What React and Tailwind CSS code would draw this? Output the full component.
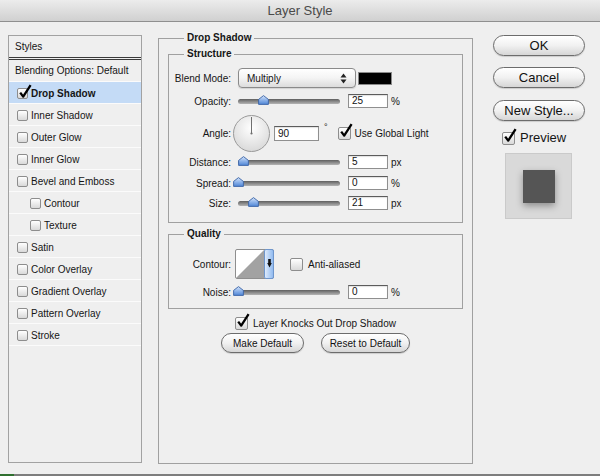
import React from 'react';

const styles = [
  { name: 'Drop Shadow', checked: true, active: true },
  { name: 'Inner Shadow' },
  { name: 'Outer Glow' },
  { name: 'Inner Glow' },
  { name: 'Bevel and Emboss' },
  { name: 'Contour', sub: true },
  { name: 'Texture', sub: true },
  { name: 'Satin' },
  { name: 'Color Overlay' },
  { name: 'Gradient Overlay' },
  { name: 'Pattern Overlay' },
  { name: 'Stroke' },
];

const CheckBox = ({ checked = false, large = false }) => (
  <span
    className={`relative shrink-0 rounded-[2px] border border-[#8d8d8d] bg-linear-to-b from-white to-[#d9d9d9] ${
      large ? 'w-[13px] h-[13px]' : 'w-[11px] h-[11px]'
    }`}
  >
    {checked && (
      <svg
        width="14"
        height="15"
        viewBox="0 0 14 15"
        className="absolute left-[0px] top-[-5px]"
      >
        <path d="M2.2 8.6 L5.2 12.6 L12.6 1.2" fill="none" stroke="#000" strokeWidth="2.3" strokeLinejoin="round" />
      </svg>
    )}
  </span>
);

const Slider = ({ pos, id }) => (
  <div className="relative shrink-0 w-[102px] h-[5px] rounded-full bg-linear-to-b from-[#5f5f5f] via-[#8a8a8a] to-[#b4b4b4]">
    <svg width="11" height="10" viewBox="0 0 11 10" className="absolute top-[-4px]" style={{ left: pos }}>
      <defs>
        <linearGradient id={id} x1="0" y1="0" x2="0" y2="1">
          <stop offset="0" stopColor="#d6e5fa" />
          <stop offset="0.5" stopColor="#8fb4ea" />
          <stop offset="1" stopColor="#4f86d6" />
        </linearGradient>
      </defs>
      <path d="M5.5 0.6 L10.4 4.4 V9.4 H0.6 V4.4 Z" fill={`url(#${id})`} stroke="#3a63a6" strokeWidth="0.9" />
    </svg>
  </div>
);

const Field = ({ value, wide = false }) => (
  <div
    className={`shrink-0 bg-white border border-[#8f8f8f] border-t-[#5c5c5c] pl-[3px] text-[10px] text-[#111] shadow-[inset_0_1px_1px_rgba(0,0,0,0.12)] ${
      wide ? 'w-[45px] h-[15px] leading-[13px]' : 'w-[40px] h-[14px] leading-[12px]'
    }`}
  >
    {value}
  </div>
);

const Row = ({ label, className = '', children }) => (
  <div className={`flex items-center ${className}`}>
    <span className="w-[62px] shrink-0 text-right">{label}</span>
    {children}
  </div>
);

const SliderRow = ({ label, pos, value, unit, id, className }) => (
  <Row label={label} className={`h-[14px] ${className}`}>
    <div className="ml-[7px]">
      <Slider pos={pos} id={id} />
    </div>
    <div className="ml-[8px]">
      <Field value={value} />
    </div>
    <span className="ml-[3px]">{unit}</span>
  </Row>
);

const AquaButton = ({ children, className = '' }) => (
  <button
    className={`flex items-center justify-center rounded-full border border-[#6c6c6c] bg-linear-to-b from-white via-[#f1f1f1] to-[#d6d6d6] shadow-[0_1px_1px_rgba(0,0,0,0.15)] text-[#111] ${className}`}
  >
    {children}
  </button>
);

export default function App() {
  return (
    <div className="w-[600px] h-[476px] flex flex-col bg-[#efefef] font-['Liberation_Sans',Arial,sans-serif] text-[#151515] overflow-hidden">
      {/* Title bar */}
      <div className="h-[22px] shrink-0 flex items-center justify-center border-b border-[#8f8f8f] bg-linear-to-b from-[#ececec] to-[#d0d0d0] text-[13px] text-[#4a4a4a]">
        Layer Style
      </div>

      <div className="flex-1 flex items-start">
        {/* Styles list */}
        <div className="ml-[8px] mt-[13px] w-[134px] h-[428px] shrink-0 border border-[#a2a2a2] text-[10px]">
          <div className="h-[24px] flex items-center pl-[6px] pb-[1px] border-b-[3px] border-double border-[#3a3a3a]">
            Styles
          </div>
          <div className="h-[22px] flex items-center pl-[6px] border-b border-[#fbfbfb]">
            Blending Options: Default
          </div>
          {styles.map((s) => (
            <div
              key={s.name}
              className={`h-[22px] flex items-center gap-[3px] pt-[2px] border-b border-[#fbfbfb] ${
                s.sub ? 'pl-[21px]' : 'pl-[8px]'
              } ${s.active ? 'bg-[#c4dbf6] font-bold' : ''}`}
            >
              <CheckBox checked={s.checked} />
              <span>{s.name}</span>
            </div>
          ))}
        </div>

        {/* Drop Shadow settings */}
        <fieldset className="ml-[16px] mt-[10px] w-[315px] h-[432px] shrink-0 border border-[#a0a0a0] px-[9px] text-[10px]">
          <legend className="ml-[16px] px-[3px] font-bold leading-[12px]">Drop Shadow</legend>

          <fieldset className="mt-[4px] border border-[#a0a0a0] pb-[12px]">
            <legend className="ml-[15px] px-[3px] font-bold leading-[12px]">Structure</legend>

            <Row label="Blend Mode:" className="mt-[8px] h-[20px]">
              <div className="ml-[7px] w-[118px] h-[20px] flex items-center justify-between pl-[8px] pr-[8px] rounded-[4px] border border-[#8a8a8a] bg-linear-to-b from-white via-[#f4f4f4] to-[#dcdcdc] shadow-[0_1px_1px_rgba(0,0,0,0.12)]">
                <span>Multiply</span>
                <svg width="7" height="11" viewBox="0 0 7 11">
                  <path d="M0.5 4.5 L3.5 0.5 L6.5 4.5 Z M0.5 6.5 L3.5 10.5 L6.5 6.5 Z" fill="#222" />
                </svg>
              </div>
              <div className="ml-[2px] w-[34px] h-[13px] bg-black border border-[#8a8a8a]" />
            </Row>

            <SliderRow label="Opacity:" pos={20} value="25" unit="%" id="t1" className="mt-[6px]" />

            <Row label="Angle:" className="mt-[7px] h-[37px]">
              <svg width="37" height="37" viewBox="0 0 37 37" className="ml-[2px] shrink-0">
                <defs>
                  <radialGradient id="dial" cx="50%" cy="35%" r="65%">
                    <stop offset="0" stopColor="#ffffff" />
                    <stop offset="1" stopColor="#d9d9d9" />
                  </radialGradient>
                </defs>
                <circle cx="18.5" cy="18.5" r="18" fill="url(#dial)" stroke="#9a9a9a" />
                <line x1="18.5" y1="2" x2="18.5" y2="18.5" stroke="#707070" strokeWidth="1" />
                <circle cx="18.5" cy="18.5" r="1.1" fill="#707070" />
              </svg>
              <div className="ml-[4px]">
                <Field value="90" wide />
              </div>
              <span className="ml-[5px] self-start mt-[8px] text-[9px] leading-[9px]">°</span>
              <div className="ml-[10px] flex items-center">
                <CheckBox checked large />
              </div>
              <span className="ml-[4px]">Use Global Light</span>
            </Row>

            <SliderRow label="Distance:" pos={0} value="5" unit="px" id="t2" className="mt-[3px]" />
            <SliderRow label="Spread:" pos={-5} value="0" unit="%" id="t3" className="mt-[7px]" />
            <SliderRow label="Size:" pos={10} value="21" unit="px" id="t4" className="mt-[6px]" />
          </fieldset>

          <fieldset className="mt-[5px] border border-[#a0a0a0] pb-[9px]">
            <legend className="ml-[15px] px-[3px] font-bold leading-[12px]">Quality</legend>

            <Row label="Contour:" className="mt-[9px] h-[30px]">
              <svg width="39" height="30" viewBox="0 0 39 30" className="ml-[4px] shrink-0">
                <defs>
                  <linearGradient id="strip" x1="0" y1="0" x2="1" y2="0">
                    <stop offset="0" stopColor="#e2edfc" />
                    <stop offset="1" stopColor="#8db8ef" />
                  </linearGradient>
                </defs>
                <rect x="0.5" y="0.5" width="38" height="29" rx="1.5" fill="#fff" stroke="#8e8e8e" />
                <polygon points="1,29 29,1 29,29" fill="#a2a2a2" />
                <rect x="29.5" y="0.5" width="9" height="29" rx="1.5" fill="url(#strip)" stroke="#6f96cc" />
                <path d="M33.2 10 H35.8 V14 H36.8 L34.5 18.5 L32.2 14 H33.2 Z" fill="#111" />
              </svg>
              <div className="ml-[16px] flex items-center">
                <CheckBox large />
              </div>
              <span className="ml-[5px]">Anti-aliased</span>
            </Row>

            <SliderRow label="Noise:" pos={-5} value="0" unit="%" id="t5" className="mt-[6px]" />
          </fieldset>

          <div className="mt-[7px] h-[14px] flex items-center justify-center">
            <CheckBox checked large />
            <span className="ml-[5px]">Layer Knocks Out Drop Shadow</span>
          </div>

          <div className="mt-[3px] flex justify-center gap-[17px]">
            <AquaButton className="w-[83px] h-[20px] text-[10px]">Make Default</AquaButton>
            <AquaButton className="w-[89px] h-[20px] text-[10px]">Reset to Default</AquaButton>
          </div>
        </fieldset>

        {/* Buttons + preview */}
        <div className="ml-[20px] mt-[13px] w-[92px] shrink-0 flex flex-col text-[13px]">
          <AquaButton className="h-[21px]">OK</AquaButton>
          <AquaButton className="mt-[11px] h-[21px]">Cancel</AquaButton>
          <AquaButton className="mt-[12px] h-[21px]">New Style...</AquaButton>
          <div className="mt-[10px] h-[14px] flex items-center pl-[9px]">
            <CheckBox checked large />
            <span className="ml-[5px]">Preview</span>
          </div>
          <div className="mt-[8px] ml-[12px] w-[67px] h-[66px] flex items-center justify-center bg-[#d9d9d9] border border-[#cacaca]">
            <div className="w-[32px] h-[33px] bg-[#555555] shadow-[0_3px_7px_rgba(0,0,0,0.35)]" />
          </div>
        </div>
      </div>

      <div className="h-[2px] shrink-0 flex">
        <div className="w-[14px] bg-[#2f6f2f]" />
        <div className="flex-1 bg-[#7d7d7d]" />
      </div>
    </div>
  );
}
